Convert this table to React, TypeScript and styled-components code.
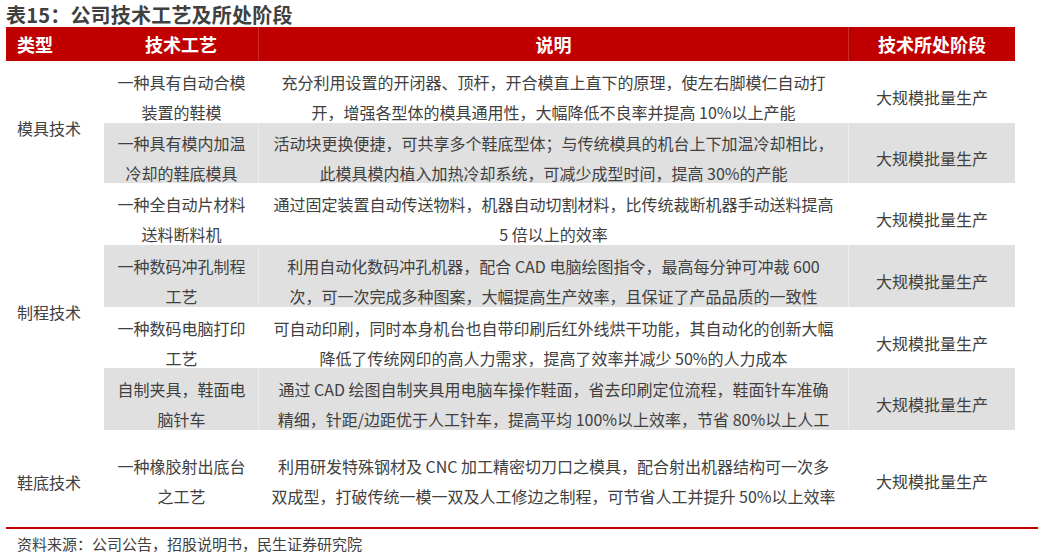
import React from 'react';
import styled, { createGlobalStyle } from 'styled-components';

const GlobalStyle = createGlobalStyle`
  body {
    margin: 0;
    background: #ffffff;
    font-family: "Noto Sans CJK SC", "Noto Sans", sans-serif;
    color: #404040;
  }
`;

type Row = {
  tech: string[];
  desc: string[];
  stage: string;
  shaded: boolean;
  height: number;
  pad: number;
};

type Group = {
  type: string;
  labelPad: number;
  rows: Row[];
};

const groups: Group[] = [
  {
    type: '模具技术',
    labelPad: 52,
    rows: [
      {
        tech: ['一种具有自动合模', '装置的鞋模'],
        desc: [
          '充分利用设置的开闭器、顶杆，开合模直上直下的原理，使左右脚模仁自动打',
          '开，增强各型体的模具通用性，大幅降低不良率并提高 10%以上产能',
        ],
        stage: '大规模批量生产',
        shaded: false,
        height: 62,
        pad: 6,
      },
      {
        tech: ['一种具有模内加温', '冷却的鞋底模具'],
        desc: [
          '活动块更换便捷，可共享多个鞋底型体；与传统模具的机台上下加温冷却相比，',
          '此模具模内植入加热冷却系统，可减少成型时间，提高 30%的产能',
        ],
        stage: '大规模批量生产',
        shaded: true,
        height: 60,
        pad: 5,
      },
      {
        tech: ['一种全自动片材料', '送料断料机'],
        desc: [
          '通过固定装置自动传送物料，机器自动切割材料，比传统裁断机器手动送料提高',
          '5 倍以上的效率',
        ],
        stage: '大规模批量生产',
        shaded: false,
        height: 62,
        pad: 6,
      },
    ],
  },
  {
    type: '制程技术',
    labelPad: 52,
    rows: [
      {
        tech: ['一种数码冲孔制程', '工艺'],
        desc: [
          '利用自动化数码冲孔机器，配合 CAD 电脑绘图指令，最高每分钟可冲裁 600',
          '次，可一次完成多种图案，大幅提高生产效率，且保证了产品品质的一致性',
        ],
        stage: '大规模批量生产',
        shaded: true,
        height: 62,
        pad: 6,
      },
      {
        tech: ['一种数码电脑打印', '工艺'],
        desc: [
          '可自动印刷，同时本身机台也自带印刷后红外线烘干功能，其自动化的创新大幅',
          '降低了传统网印的高人力需求，提高了效率并减少 50%的人力成本',
        ],
        stage: '大规模批量生产',
        shaded: false,
        height: 61,
        pad: 6,
      },
      {
        tech: ['自制夹具，鞋面电', '脑针车'],
        desc: [
          '通过 CAD 绘图自制夹具用电脑车操作鞋面，省去印刷定位流程，鞋面针车准确',
          '精细，针距/边距优于人工针车，提高平均 100%以上效率，节省 80%以上人工',
        ],
        stage: '大规模批量生产',
        shaded: true,
        height: 62,
        pad: 6,
      },
    ],
  },
  {
    type: '鞋底技术',
    labelPad: 37,
    rows: [
      {
        tech: ['一种橡胶射出底台', '之工艺'],
        desc: [
          '利用研发特殊钢材及 CNC 加工精密切刀口之模具，配合射出机器结构可一次多',
          '双成型，打破传统一模一双及人工修边之制程，可节省人工并提升 50%以上效率',
        ],
        stage: '大规模批量生产',
        shaded: false,
        height: 97,
        pad: 21,
      },
    ],
  },
];

const Page = styled.div`
  width: 1044px;
  padding-left: 6px;
  box-sizing: border-box;
`;

const Title = styled.div`
  padding-top: 3px;
  font-size: 20px;
  line-height: 24px;
  font-weight: 700;
  color: #404040;
  letter-spacing: 0.2px;
  white-space: nowrap;
`;

const Table = styled.div`
  display: grid;
  grid-template-columns: 98px 154px 590px 167px;
  width: 1009px;
`;

const HeadCell = styled.div<{ $align?: 'left' | 'center'; $sep?: boolean }>`
  height: 34px;
  background: #c00000;
  color: #ffffff;
  font-size: 18px;
  font-weight: 700;
  line-height: 34px;
  text-align: ${(p) => p.$align ?? 'center'};
  padding-left: ${(p) => (p.$align === 'left' ? '11px' : '0')};
  border-left: ${(p) => (p.$sep ? '1px solid #c92b2b' : 'none')};
  white-space: nowrap;
`;

const TypeCell = styled.div<{ $span: number; $pad: number }>`
  grid-column: 1;
  grid-row: span ${(p) => p.$span};
  padding-top: ${(p) => p.$pad}px;
  padding-left: 11px;
  font-size: 16px;
  line-height: 30px;
  white-space: nowrap;
`;

const BodyCell = styled.div<{ $shaded: boolean; $h: number; $sep?: boolean; $pad: number }>`
  height: ${(p) => p.$h}px;
  box-sizing: border-box;
  padding-top: ${(p) => p.$pad}px;
  background: ${(p) => (p.$shaded ? '#e0e0e0' : '#ffffff')};
  border-left: ${(p) => (p.$sep && p.$shaded ? '1px solid #ececec' : '1px solid transparent')};
  font-size: 16px;
  line-height: 30px;
  text-align: center;
  white-space: nowrap;
  overflow: visible;
`;

const Line = styled.div``;

const RedRule = styled.div`
  width: 1032px;
  height: 2px;
  background: #c00000;
`;

const Source = styled.div`
  padding: 3px 0 0 11px;
  font-size: 15px;
  line-height: 24px;
  color: #404040;
  white-space: nowrap;
`;

const App = () => {
  return (
    <>
      <GlobalStyle />
      <Page>
        <Title>表15：公司技术工艺及所处阶段</Title>
        <Table>
          <HeadCell $align="left">类型</HeadCell>
          <HeadCell>技术工艺</HeadCell>
          <HeadCell $sep>说明</HeadCell>
          <HeadCell $sep>技术所处阶段</HeadCell>
          {groups.map((g) => (
            <React.Fragment key={g.type}>
              <TypeCell $span={g.rows.length} $pad={g.labelPad}>
                {g.type}
              </TypeCell>
              {g.rows.map((r, i) => (
                <React.Fragment key={i}>
                  <BodyCell $shaded={r.shaded} $h={r.height} $pad={r.pad}>
                    {r.tech.map((t) => (
                      <Line key={t}>{t}</Line>
                    ))}
                  </BodyCell>
                  <BodyCell $shaded={r.shaded} $h={r.height} $pad={r.pad} $sep>
                    {r.desc.map((t) => (
                      <Line key={t}>{t}</Line>
                    ))}
                  </BodyCell>
                  <BodyCell $shaded={r.shaded} $h={r.height} $pad={r.pad + 15} $sep>
                    {r.stage}
                  </BodyCell>
                </React.Fragment>
              ))}
            </React.Fragment>
          ))}
        </Table>
        <RedRule />
        <Source>资料来源：公司公告，招股说明书，民生证券研究院</Source>
      </Page>
    </>
  );
};

export default App;
